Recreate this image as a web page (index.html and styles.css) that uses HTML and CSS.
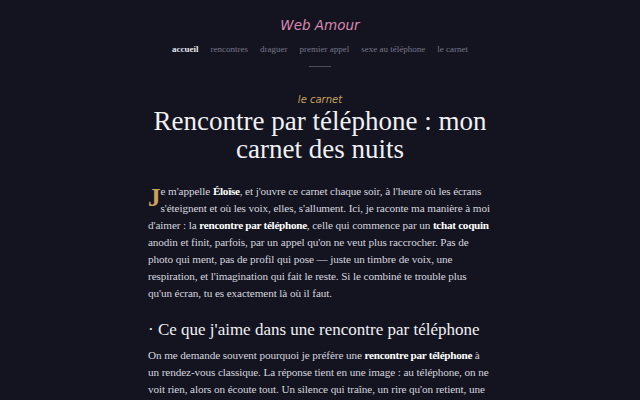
FILE: index.html
```html
<!DOCTYPE html>
<html lang="fr">
<head>
<meta charset="utf-8">
<title>Web Amour</title>
<link rel="stylesheet" href="styles.css">
</head>
<body>
<header class="site-header">
  <div class="logo">Web Amour</div>
  <nav class="nav">
    <a class="nav-link active" href="#">accueil</a>
    <a class="nav-link" href="#">rencontres</a>
    <a class="nav-link" href="#">draguer</a>
    <a class="nav-link" href="#">premier appel</a>
    <a class="nav-link" href="#">sexe au téléphone</a>
    <a class="nav-link" href="#">le carnet</a>
  </nav>
  <div class="rule"></div>
</header>
<main class="article">
  <div class="kicker">le carnet</div>
  <h1 class="title">Rencontre par téléphone : mon carnet des nuits</h1>
  <p class="lead"><span class="dropcap">J</span>e m'appelle <strong>Éloïse</strong>, et j'ouvre ce carnet chaque soir, à l'heure où les écrans s'éteignent et où les voix, elles, s'allument. Ici, je raconte ma manière à moi d'aimer : la <strong>rencontre par téléphone</strong>, celle qui commence par un <strong>tchat coquin</strong> anodin et finit, parfois, par un appel qu'on ne veut plus raccrocher. Pas de photo qui ment, pas de profil qui pose — juste un timbre de voix, une respiration, et l'imagination qui fait le reste. Si le combiné te trouble plus qu'un écran, tu es exactement là où il faut.</p>
  <h2 class="section-title">· Ce que j'aime dans une rencontre par téléphone</h2>
  <p class="para">On me demande souvent pourquoi je préfère une <strong>rencontre par téléphone</strong> à un rendez-vous classique. La réponse tient en une image : au téléphone, on ne voit rien, alors on écoute tout. Un silence qui traîne, un rire qu'on retient, une intonation qui change, et tout est dit.</p>
</main>
</body>
</html>
```
FILE: styles.css
```css
html, body {
  margin: 0;
  padding: 0;
  background: #13141f;
}
body {
  color: #d6d6df;
  font-family: "Liberation Serif", "DejaVu Serif", serif;
  overflow: hidden;
}
.site-header {
  display: flex;
  flex-direction: column;
  align-items: center;
  padding-top: 14px;
}
.logo {
  font-family: "DejaVu Sans", sans-serif;
  font-style: italic;
  font-size: 13.5px;
  color: #d98ab3;
  letter-spacing: 0;
  line-height: 22px;
}
.nav {
  display: flex;
  gap: 12px;
  margin-top: 7px;
  font-size: 9px;
  line-height: 12px;
}
.nav-link {
  color: #767789;
  text-decoration: none;
}
.nav-link.active {
  color: #e3e3ea;
  font-weight: bold;
}
.rule {
  width: 22px;
  height: 1px;
  background: #4a4b5e;
  margin-top: 11px;
}
.article {
  width: 344px;
  margin: 0 auto;
  padding-top: 26px;
}
.kicker {
  text-align: center;
  font-family: "DejaVu Sans", sans-serif;
  font-style: italic;
  font-size: 10px;
  line-height: 14px;
  color: #c9a35c;
}
.title {
  margin: 0;
  text-align: center;
  font-size: 27px;
  line-height: 28px;
  font-weight: normal;
  color: #f0f0f5;
}
.lead, .para {
  margin: 0;
  font-size: 11.2px;
  letter-spacing: -0.1px;
  line-height: 17px;
}
.lead {
  margin-top: 20px;
}
.dropcap {
  float: left;
  font-size: 25px;
  line-height: 24px;
  font-weight: bold;
  letter-spacing: 0;
  color: #c9a35c;
  margin: 3px 0 0 0;
}
strong {
  color: #ffffff;
  font-weight: bold;
  letter-spacing: -0.3px;
}
.section-title {
  margin: 17px 0 6px 0;
  font-size: 17px;
  line-height: 22px;
  font-weight: normal;
  color: #f0f0f5;
}
```
